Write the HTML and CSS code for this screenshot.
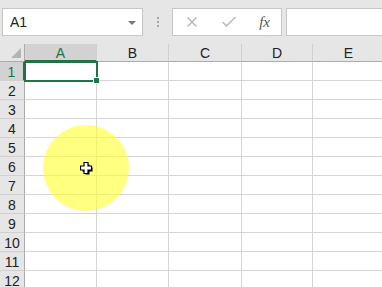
FILE: index.html
```html
<!DOCTYPE html>
<html lang="en">
<head>
  <meta charset="UTF-8">
  <title>Sheet</title>
  <link rel="stylesheet" href="styles.css">
</head>
<body>
  <div class="formula-bar">
    <div class="name-box">
      <span>A1</span>
      <span class="caret"></span>
    </div>
    <div class="grip"><i></i><i></i><i></i></div>
    <div class="fx-buttons">
      <svg width="12" height="12" viewBox="0 0 12 12"><path d="M1.5 1.5 L10.5 10.5 M10.5 1.5 L1.5 10.5" stroke="#b4b4b4" stroke-width="1.3"/></svg>
      <svg width="16" height="12" viewBox="0 0 16 12"><path d="M1.5 6 L5.5 10 L14.5 1" stroke="#b4b4b4" stroke-width="1.4" fill="none"/></svg>
      <span class="fx">fx</span>
    </div>
    <div class="formula-input"></div>
  </div>

  <div class="sheet">
    <div class="grid" id="grid">
      <div class="corner"><span class="tri"></span></div>
      <div class="col-head active">A</div>
      <div class="col-head">B</div>
      <div class="col-head">C</div>
      <div class="col-head">D</div>
      <div class="col-head">E</div>
    </div>
    <div class="selection"><span class="handle"></span></div>
    <div class="highlight"></div>
    <svg class="cursor" width="13" height="13" viewBox="0 0 13 13">
      <path d="M4 1 H8 V4 H11 V8 H8 V11 H4 V8 H1 V4 H4 Z" fill="#000" transform="translate(1.5 1.5)"/>
      <path d="M4 0.5 H8 V4 H11.5 V8 H8 V11.5 H4 V8 H0.5 V4 H4 Z" fill="#fff" stroke="#000" stroke-width="1.2"/>
    </svg>
  </div>

  <script>
    var grid = document.getElementById('grid');
    for (var r = 1; r <= 12; r++) {
      var h = document.createElement('div');
      h.className = 'row-head' + (r === 1 ? ' active' : '');
      h.textContent = r;
      grid.appendChild(h);
      for (var c = 0; c < 5; c++) {
        var cell = document.createElement('div');
        cell.className = 'cell';
        grid.appendChild(cell);
      }
    }
  </script>
</body>
</html>
```

FILE: styles.css
```css
body {
  margin: 0;
  background-color: #e6e6e6;
  font-family: 'Liberation Sans', Arial, sans-serif;
  overflow: hidden;
  width: 382px;
  height: 287px;
}

.formula-bar {
  display: flex;
  align-items: center;
  height: 44px;
  padding-left: 2px;
  box-sizing: border-box;
}

.name-box {
  display: flex;
  align-items: center;
  justify-content: space-between;
  width: 141px;
  height: 28px;
  box-sizing: border-box;
  background: #fff;
  border: 1px solid #c6c6c6;
  padding: 0 6px 0 7px;
  font-size: 14px;
  color: #222;
}

.caret {
  width: 0;
  height: 0;
  border-left: 4px solid transparent;
  border-right: 4px solid transparent;
  border-top: 4px solid #777;
  margin-top: 1px;
}

.grip {
  display: flex;
  flex-direction: column;
  gap: 2px;
  width: 2px;
  margin: 0 13px 0 14px;
}

.grip i {
  display: block;
  width: 2px;
  height: 2px;
  background: #a6a6a6;
}

.fx-buttons {
  display: flex;
  align-items: center;
  justify-content: space-between;
  width: 110px;
  height: 28px;
  box-sizing: border-box;
  background: #fff;
  border: 1px solid #c6c6c6;
  padding: 0 11px 0 13px;
}

.fx {
  font-family: 'Liberation Serif', serif;
  font-style: italic;
  font-size: 15px;
  color: #555;
}

.formula-input {
  flex: 1;
  height: 28px;
  margin-left: 4px;
  box-sizing: border-box;
  background: #fff;
  border: 1px solid #c6c6c6;
  border-right: none;
}

.sheet {
  position: relative;
  height: 243px;
  overflow: hidden;
}

.grid {
  display: grid;
  grid-template-columns: 25px 72px 72px 73px 71px 72px;
  grid-auto-rows: 19px;
  grid-template-rows: 18px;
  background: #fff;
}

.corner,
.col-head,
.row-head {
  background: #e6e6e6;
  color: #222;
  font-size: 14px;
  display: flex;
  align-items: center;
  justify-content: center;
  box-sizing: border-box;
}

.corner {
  position: relative;
  border-right: 1px solid #ababab;
  border-bottom: 1px solid #ababab;
}

.tri {
  position: absolute;
  right: 3px;
  bottom: 3px;
  width: 0;
  height: 0;
  border-left: 10px solid transparent;
  border-bottom: 10px solid #b4b4b4;
}

.col-head {
  border-right: 1px solid #d0d0d0;
  border-bottom: 1px solid #ababab;
  padding-top: 1px;
}

.col-head.active {
  background: #d2d2d2;
  color: #217346;
  border-bottom: 2px solid #217346;
}

.row-head {
  border-right: 1px solid #ababab;
  border-bottom: 1px solid #d0d0d0;
  padding-top: 1px;
}

.row-head.active {
  background: #d2d2d2;
  color: #217346;
  border-right: 2px solid #217346;
}

.cell {
  border-right: 1px solid #d4d4d4;
  border-bottom: 1px solid #d4d4d4;
  box-sizing: border-box;
}

.selection {
  position: absolute;
  left: 24px;
  top: 17px;
  width: 74px;
  height: 21px;
  border: 2px solid #217346;
  box-sizing: border-box;
}

.handle {
  position: absolute;
  right: -4px;
  bottom: -4px;
  width: 5px;
  height: 5px;
  background: #217346;
  border: 1px solid #fff;
}

.highlight {
  position: absolute;
  left: 43px;
  top: 81px;
  width: 86px;
  height: 86px;
  border-radius: 50%;
  background: radial-gradient(circle, rgba(255, 255, 50, 0.62) 0%, rgba(255, 255, 50, 0.62) 78%, rgba(255, 255, 50, 0) 100%);
}

.cursor {
  position: absolute;
  left: 80px;
  top: 118px;
}
```
